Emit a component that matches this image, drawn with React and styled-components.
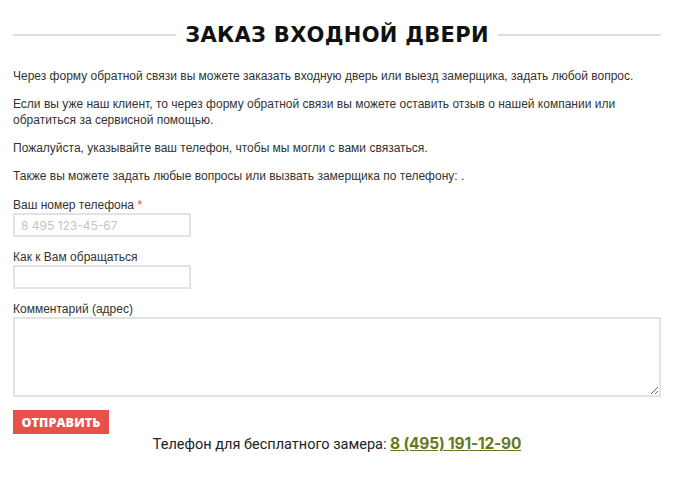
import React from "react";
import styled, { createGlobalStyle } from "styled-components";

const GlobalStyle = createGlobalStyle`
  html, body { margin: 0; padding: 0; background: #fff; }
  body { font-family: "Liberation Sans", Arial, sans-serif; color: #333; }
  * { box-sizing: border-box; }
`;

const Page = styled.div`
  width: 648px;
  margin-left: 13px;
  padding-top: 22px;
`;

const TitleRow = styled.div`
  display: flex;
  align-items: center;
  gap: 9px;
  height: 26px;
  margin-bottom: 20px;
`;

const Rule = styled.span`
  flex: 1;
  height: 2px;
  background: #dedede;
`;

const Title = styled.h2`
  margin: 0;
  font-family: "DejaVu Sans", sans-serif;
  font-weight: 700;
  font-size: 21px;
  line-height: 26px;
  color: #111;
  letter-spacing: 0.3px;
`;

const Para = styled.p`
  margin: 0 0 12px;
  font-size: 12px;
  line-height: 16px;
  color: #333;
`;

const Field = styled.div`
  display: flex;
  flex-direction: column;
  margin-top: ${(p) => p.$top}px;
`;

const Label = styled.label`
  font-size: 12px;
  line-height: 15px;
  color: #333;
`;

const Required = styled.span`
  color: #e04a3f;
`;

const Input = styled.input`
  width: 178px;
  height: 24px;
  border: 2px solid #e3e3e3;
  padding: 0 6px;
  font-family: "Inter", "Liberation Sans", sans-serif;
  font-size: 12px;
  color: #333;
  outline: none;
  &::placeholder { color: #c4c4c4; }
`;

const TextArea = styled.textarea`
  width: 648px;
  height: 80px;
  border: 2px solid #e3e3e3;
  font-family: "Liberation Sans", sans-serif;
  font-size: 12px;
  outline: none;
  resize: both;
`;

const Submit = styled.button`
  align-self: flex-start;
  margin-top: 13px;
  height: 24px;
  width: 96px;
  border: none;
  background: #e8514a;
  color: #fff;
  font-family: "Open Sans", "Liberation Sans", sans-serif;
  font-weight: 800;
  font-size: 12.5px;
  letter-spacing: 0.1px;
  padding: 0;
  cursor: pointer;
`;

const Form = styled.form`
  display: flex;
  flex-direction: column;
`;

const PhoneLine = styled.div`
  text-align: center;
  font-family: "Roboto", "Liberation Sans", sans-serif;
  font-size: 14.5px;
  line-height: 20px;
  color: #222;
`;

const PhoneLink = styled.a`
  font-family: "Inter", "Liberation Sans", sans-serif;
  font-weight: 700;
  font-size: 15.5px;
  color: #66781d;
  text-decoration: underline;
  letter-spacing: -0.2px;
`;

export default function App() {
  return (
    <>
      <GlobalStyle />
      <Page>
        <TitleRow>
          <Rule />
          <Title>ЗАКАЗ ВХОДНОЙ ДВЕРИ</Title>
          <Rule />
        </TitleRow>
        <Para>
          Через форму обратной связи вы можете заказать входную дверь или выезд замерщика, задать любой вопрос.
        </Para>
        <Para>
          Если вы уже наш клиент, то через форму обратной связи вы можете оставить отзыв о нашей компании или
          обратиться за сервисной помощью.
        </Para>
        <Para>Пожалуйста, указывайте ваш телефон, чтобы мы могли с вами связаться.</Para>
        <Para>Также вы можете задать любые вопросы или вызвать замерщика по телефону: .</Para>
        <Form onSubmit={(e) => e.preventDefault()}>
          <Field $top={2}>
            <Label>
              Ваш номер телефона <Required>*</Required>
            </Label>
            <Input placeholder="8 495 123-45-67" />
          </Field>
          <Field $top={13}>
            <Label>Как к Вам обращаться</Label>
            <Input />
          </Field>
          <Field $top={13}>
            <Label>Комментарий (адрес)</Label>
            <TextArea />
          </Field>
          <Submit type="submit">ОТПРАВИТЬ</Submit>
        </Form>
        <PhoneLine>
          Телефон для бесплатного замера: <PhoneLink href="#">8 (495) 191-12-90</PhoneLink>
        </PhoneLine>
      </Page>
    </>
  );
}
